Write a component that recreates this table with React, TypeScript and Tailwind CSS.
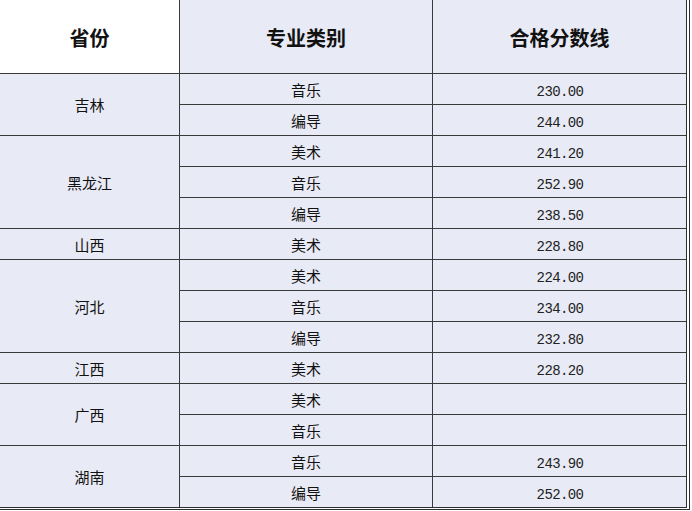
type Row = { major: string; score: string }
type Group = { province: string; rows: Row[] }

const groups: Group[] = [
  { province: '吉林', rows: [{ major: '音乐', score: '230.00' }, { major: '编导', score: '244.00' }] },
  {
    province: '黑龙江',
    rows: [
      { major: '美术', score: '241.20' },
      { major: '音乐', score: '252.90' },
      { major: '编导', score: '238.50' },
    ],
  },
  { province: '山西', rows: [{ major: '美术', score: '228.80' }] },
  {
    province: '河北',
    rows: [
      { major: '美术', score: '224.00' },
      { major: '音乐', score: '234.00' },
      { major: '编导', score: '232.80' },
    ],
  },
  { province: '江西', rows: [{ major: '美术', score: '228.20' }] },
  { province: '广西', rows: [{ major: '美术', score: '' }, { major: '音乐', score: '' }] },
  { province: '湖南', rows: [{ major: '音乐', score: '243.90' }, { major: '编导', score: '252.00' }] },
]

const cjk = "font-['Noto_Sans_CJK_SC',sans-serif]"

export default function App() {
  return (
    <div className="w-[692px] h-[511px] bg-white">
      <div className={`w-[690px] border-r-4 border-b-[3px] border-double border-[#2e2e2e] text-[#111] ${cjk}`}>
        {/* Header */}
        <div className="flex h-[74px] border-b border-[#3a3a3a]">
          <div className="w-[180px] border-r border-[#3a3a3a] bg-white flex items-center justify-center pt-[3px] text-[20px] font-bold">
            省份
          </div>
          <div className="w-[253px] border-r border-[#3a3a3a] bg-[#e8eaf5] flex items-center justify-center pt-[3px] text-[20px] font-bold">
            专业类别
          </div>
          <div className="flex-1 bg-[#e8eaf5] flex items-center justify-center pt-[3px] text-[20px] font-bold">
            合格分数线
          </div>
        </div>

        {/* Body */}
        {groups.map((g, gi) => (
          <div
            key={g.province}
            className={`flex bg-[#e8eaf5] ${gi < groups.length - 1 ? 'border-b border-[#3a3a3a]' : ''}`}
          >
            <div className="w-[180px] border-r border-[#3a3a3a] flex items-center justify-center pt-[2px] text-[15px]">
              {g.province}
            </div>
            <div className="flex-1 flex flex-col">
              {g.rows.map((r, ri) => (
                <div
                  key={ri}
                  className={`flex ${ri < g.rows.length - 1 ? 'h-[31px] border-b border-[#3a3a3a]' : 'h-[30px]'}`}
                >
                  <div className="w-[253px] border-r border-[#3a3a3a] flex items-center justify-center pt-[2px] text-[15px]">
                    {r.major}
                  </div>
                  <div className="flex-1 flex items-center justify-center pt-[6px] pl-px text-[14px] tracking-[-0.6px] text-[#222] font-['Liberation_Mono',monospace]">
                    {r.score}
                  </div>
                </div>
              ))}
            </div>
          </div>
        ))}
      </div>
    </div>
  )
}
